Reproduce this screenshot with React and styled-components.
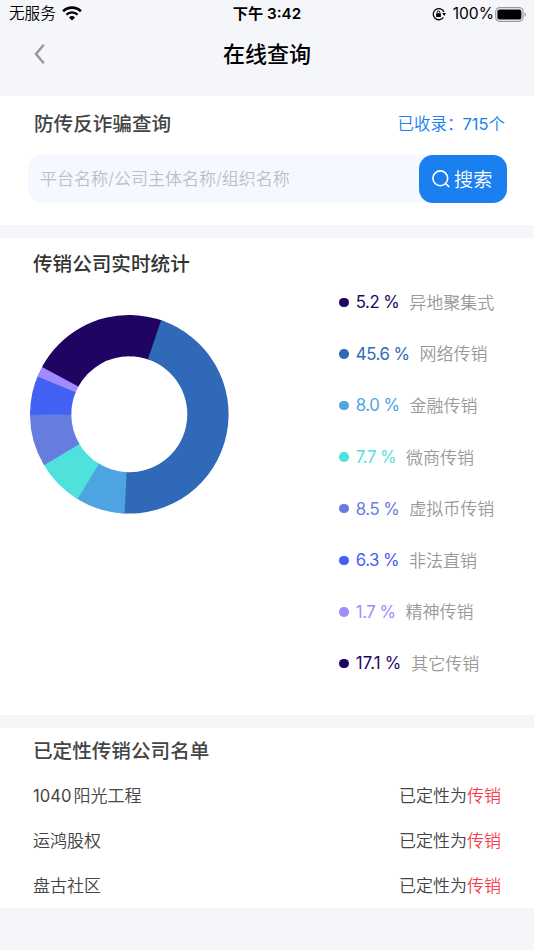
import React from 'react'
import styled, { createGlobalStyle } from 'styled-components'

const stats = [
    { value: 5.2, name: '异地聚集式', color: '#1f0561' },
    { value: 45.6, name: '网络传销', color: '#3069b8' },
    { value: 8.0, name: '金融传销', color: '#4ea4e0' },
    { value: 7.7, name: '微商传销', color: '#4fe2dd' },
    { value: 8.5, name: '虚拟币传销', color: '#677cdf' },
    { value: 6.3, name: '非法直销', color: '#4262f3' },
    { value: 1.7, name: '精神传销', color: '#a18bff' },
    { value: 17.1, name: '其它传销', color: '#1f0561', tracking: '0.1px' },
]

const companies = [
    { code: '1040', name: '阳光工程' },
    { name: '运鸿股权' },
    { name: '盘古社区' },
]

function WifiIcon() {
    return (
        <svg width="20" height="15" viewBox="0 0 20 15" fill="none">
            <path d="M1.1 5.2a12.9 12.9 0 0 1 17.8 0" stroke="#000" strokeWidth="2.6" />
            <path d="M4.4 8.6a8.1 8.1 0 0 1 11.2 0" stroke="#000" strokeWidth="2.4" />
            <path d="M10 14.4l-3-3a4.3 4.3 0 0 1 6 0z" fill="#000" />
        </svg>
    )
}

function RotationLockIcon() {
    return (
        <svg width="14" height="14" viewBox="0 0 14 14" fill="none">
            <path d="M11.4 10.4A5.6 5.6 0 1 1 12 5" stroke="#000" strokeWidth="1.3" />
            <path d="M10.2 6h3.8l-1.8 3z" fill="#000" />
            <rect x="4.1" y="6.2" width="4.8" height="3.8" rx="0.5" fill="#000" />
            <path d="M5.2 6.4V5.3a1.3 1.3 0 0 1 2.6 0v1.1" stroke="#000" strokeWidth="1" />
        </svg>
    )
}

function BatteryIcon() {
    return (
        <svg width="32" height="15" viewBox="0 0 32 15" fill="none">
            <rect x="0.7" y="0.7" width="27.4" height="13.6" rx="4" stroke="#999a9d" strokeWidth="1.2" />
            <rect x="2.4" y="2.4" width="24" height="10.2" rx="2.2" fill="#000" />
            <path d="M29.6 5.2c1.9.8 1.9 3.8 0 4.6z" fill="#999a9d" />
        </svg>
    )
}

function Donut({ data }) {
    const c = 99.3
    const inner = 58
    const total = data.reduce((sum, d) => sum + d.value, 0)
    let acc = 0

    const point = (r, t) => {
        const a = t * Math.PI * 2
        return `${c + r * Math.sin(a)} ${c - r * Math.cos(a)}`
    }

    return (
        <svg width="198.6" height="198.6" viewBox="0 0 198.6 198.6">
            {data.map(d => {
                const from = acc / total
                acc += d.value
                // run slightly under the next slice so no seam shows
                const to = acc / total + 0.006
                const large = to - from > 0.5 ? 1 : 0
                return (
                    <path
                        key={d.name}
                        fill={d.color}
                        d={`M${point(c, from)} A${c} ${c} 0 ${large} 1 ${point(c, to)} L${point(inner, to)} A${inner} ${inner} 0 ${large} 0 ${point(inner, from)} Z`}
                    />
                )
            })}
        </svg>
    )
}

function App() {
    return (
        <Page>
            <GlobalStyle />
            <StatusBar>
                <StatusLeft>无服务<WifiIcon /></StatusLeft>
                <StatusTime>下午 3:42</StatusTime>
                <StatusRight>
                    <RotationLockIcon />
                    <span>100%</span>
                    <BatteryIcon />
                </StatusRight>
            </StatusBar>
            <NavBar>
                <BackButton aria-label="返回">
                    <svg width="12" height="22" viewBox="0 0 12 22" fill="none">
                        <path d="M9.8 1.8L2 11l7.8 9.2" stroke="#999" strokeWidth="2.5" />
                    </svg>
                </BackButton>
                <NavTitle>在线查询</NavTitle>
            </NavBar>

            <SearchSection>
                <SearchHead>
                    <Title $color="#444">防传反诈骗查询</Title>
                    <Count>已收录：<span>715</span>个</Count>
                </SearchHead>
                <SearchBox>
                    <SearchInput placeholder="平台名称/公司主体名称/组织名称" />
                    <SearchButton>
                        <svg width="18" height="18" viewBox="0 0 18 18" fill="none">
                            <circle cx="8.3" cy="8.3" r="7.4" stroke="#fff" strokeWidth="1.6" />
                            <path d="M13.5 13.5l3.8 3.6" stroke="#fff" strokeWidth="1.6" />
                        </svg>
                        搜索
                    </SearchButton>
                </SearchBox>
            </SearchSection>

            <StatsSection>
                <Title $color="#333">传销公司实时统计</Title>
                <StatsBody>
                    <Donut data={stats} />
                    <Legend>
                        {stats.map(s => (
                            <LegendItem key={s.name}>
                                <Dot $color={s.color} />
                                <Percent $color={s.color} $tracking={s.tracking}>{s.value.toFixed(1)}<i>%</i></Percent>
                                <LegendName>{s.name}</LegendName>
                            </LegendItem>
                        ))}
                    </Legend>
                </StatsBody>
            </StatsSection>

            <ListSection>
                <Title $color="#444">已定性传销公司名单</Title>
                <List>
                    {companies.map(({ code, name }) => (
                        <Row key={name}>
                            <span>{code && <Code>{code}</Code>}{name}</span>
                            <span>已定性为<Tag>传销</Tag></span>
                        </Row>
                    ))}
                </List>
            </ListSection>
        </Page>
    )
}

const GlobalStyle = createGlobalStyle`
    * {
        box-sizing: border-box;
    }
    body {
        margin: 0;
        background: #f5f6fa;
    }
`;

const Page = styled.div`
    width: 534px;
    height: 950px;
    overflow: hidden;
    background: #f5f6fa;
    font-family: Inter, 'Noto Sans CJK SC', sans-serif;
    color: #444;

    svg {
        display: block;
        flex-shrink: 0;
    }
`;

const StatusBar = styled.div`
    display: grid;
    grid-template-columns: 1fr auto 1fr;
    align-items: center;
    height: 28px;
    padding: 0 7px 0 9px;
    font-size: 15.6px;
    line-height: 26px;
    color: #000;
`;

const StatusLeft = styled.div`
    display: flex;
    align-items: center;
    gap: 6px;
    font-weight: 350;

    svg {
        margin-top: -2px;
    }
`;

const StatusTime = styled.div`
    margin-right: 2px;
    font-size: 15.2px;
    font-weight: 600;
`;

const StatusRight = styled.div`
    display: flex;
    align-items: center;
    justify-content: flex-end;

    span {
        margin: 0 1px 0 7px;
    }
`;

const NavBar = styled.div`
    display: grid;
    grid-template-columns: 1fr auto 1fr;
    align-items: center;
    height: 68px;
    padding: 0 34px 16px;
`;

const BackButton = styled.button`
    justify-self: start;
    padding: 0;
    border: none;
    background: none;
`;

const NavTitle = styled.h1`
    margin: 0;
    font-size: 22px;
    font-weight: 500;
    line-height: 32px;
    color: #000;
`;

const Section = styled.section`
    background: #fff;
`;

const SearchSection = styled(Section)`
    height: 129px;
    padding: 13px 27px 0 28px;
`;

const StatsSection = styled(Section)`
    height: 477px;
    margin-top: 13px;
    padding: 11px 30px 0 33px;
`;

const ListSection = styled(Section)`
    height: 180px;
    margin-top: 13px;
    padding: 8px 33px 0;
`;

const Title = styled.h2`
    margin: 0;
    font-size: 19.6px;
    font-weight: 500;
    line-height: 30px;
    color: ${p => p.$color};
`;

const SearchHead = styled.div`
    display: flex;
    align-items: center;
    justify-content: space-between;
    padding: 0 2px 0 6px;
`;

const Count = styled.div`
    font-size: 16.5px;
    font-weight: 350;
    line-height: 28px;
    color: #1b80ef;

    span {
        margin-left: -1px;
        font-weight: 400;
    }
`;

const SearchBox = styled.div`
    display: flex;
    height: 48px;
    margin-top: 16px;
    border-radius: 14px;
    background: #f5f8ff;
`;

const SearchInput = styled.input`
    flex: 1;
    min-width: 0;
    padding: 0 0 1px 12px;
    border: none;
    outline: none;
    background: transparent;
    font-family: inherit;
    font-size: 17px;
    font-weight: 350;

    &::placeholder {
        color: #bcbfc5;
    }
`;

const SearchButton = styled.button`
    display: flex;
    align-items: center;
    justify-content: center;
    gap: 4.5px;
    width: 88px;
    padding: 0 2px 1px 0;
    border: none;
    border-radius: 14px;
    background: #1b80ef;
    font-family: inherit;
    font-size: 19.2px;
    font-weight: 350;
    color: #fff;
`;

const StatsBody = styled.div`
    display: flex;
    justify-content: space-between;

    > svg {
        margin: 36px 0 0 -3px;
    }
`;

const Legend = styled.ul`
    width: 164.6px;
    margin: -2.5px 0 0;
    padding: 0;
    list-style: none;
`;

const LegendItem = styled.li`
    display: flex;
    align-items: center;
    height: 51.6px;
    font-size: 17px;
    color: #999;
`;

const LegendName = styled.span`
    padding-bottom: 2px;
    font-weight: 350;
`;

const Dot = styled.i`
    width: 9.4px;
    height: 9.4px;
    margin-right: 7px;
    border-radius: 50%;
    background: ${p => p.$color};
`;

const Percent = styled.span`
    margin-right: 10px;
    font-size: 16.8px;
    font-weight: 400;
    letter-spacing: ${p => p.$tracking || '-0.45px'};
    color: ${p => p.$color};

    i {
        margin-left: 4px;
        font-style: normal;
    }
`;

const List = styled.div`
    margin-top: 6px;
`;

const Row = styled.div`
    display: flex;
    align-items: center;
    justify-content: space-between;
    height: 45px;
    font-size: 17px;
    font-weight: 350;
`;

const Code = styled.span`
    margin-right: 2px;
    font-size: 16.6px;
    font-weight: 400;
`;

const Tag = styled.span`
    color: #fb3c4c;
`;

export default App
